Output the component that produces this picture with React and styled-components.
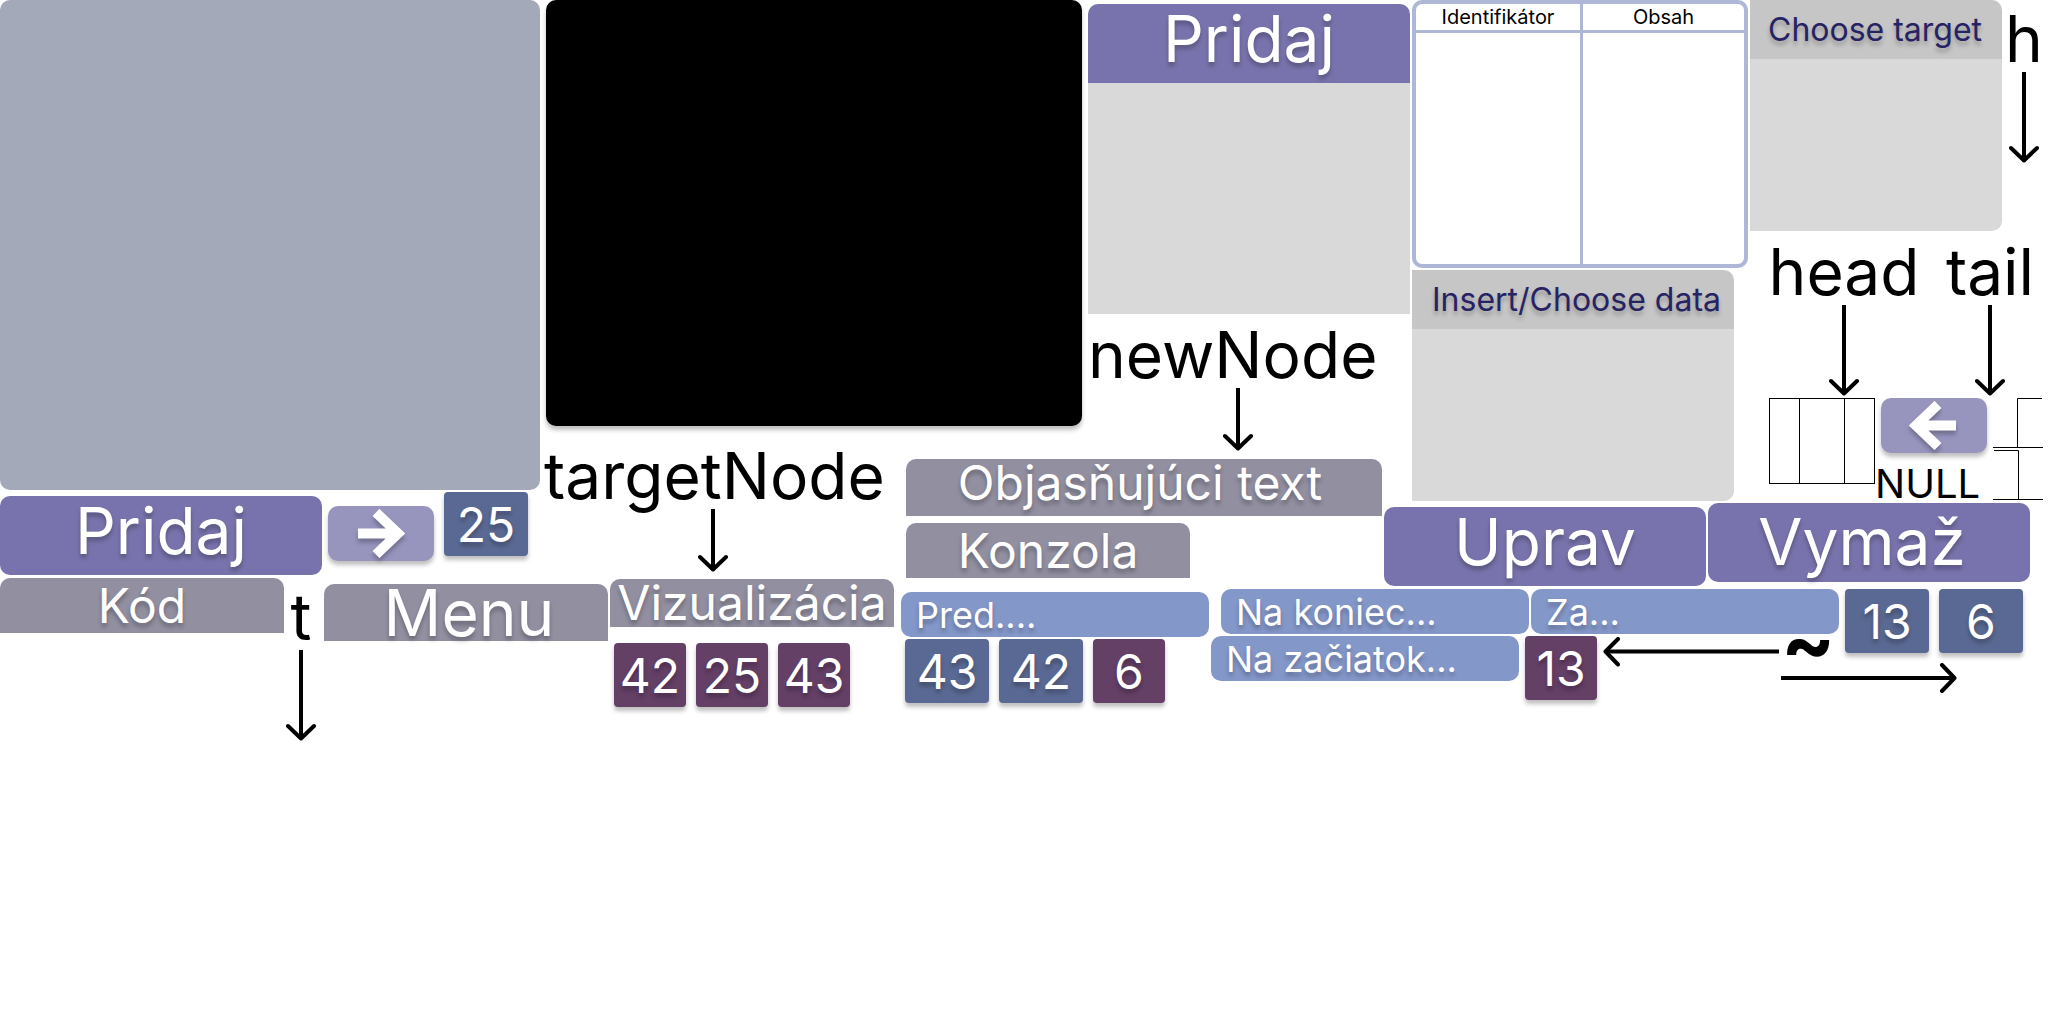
import React from "react";
import styled, { createGlobalStyle } from "styled-components";

const GlobalStyle = createGlobalStyle`
  *, *::before, *::after { box-sizing: border-box; }
  body {
    margin: 0;
    background: #fff;
    color: #000;
    font-family: Inter, "Liberation Sans", sans-serif;
    overflow-x: hidden;
  }
  button { font: inherit; border: 0; margin: 0; padding: 0; cursor: pointer; }
`;

const color = {
  slate: "#a3a9b9",
  violet: "#7873ac",
  lilac: "#9794be",
  navy: "#5a6993",
  plum: "#643f66",
  title: "#918fa0",
  option: "#8497c9",
  body: "#d9d9d9",
  head: "#c6c6c6",
  line: "#aeb7d5",
  ink: "#272263",
};

const Sheet = styled.main`
  display: grid;
  grid-template-columns:
    minmax(544px, 544fr) minmax(362px, 362fr) minmax(182px, 182fr)
    minmax(123px, 123fr) minmax(173px, 173fr) minmax(28px, 28fr)
    minmax(338px, 338fr) minmax(298px, 298fr);
  grid-template-rows: 431px 28px 44px 75px 11px auto;
  align-items: start;
`;

const Area = styled.section`
  grid-column: ${(p) => p.$cols};
  grid-row: ${(p) => p.$rows};
  min-width: 0;
`;

const Stack = styled.div`
  display: flex;
  flex-direction: column;
  align-items: flex-start;
  gap: ${(p) => p.$gap || 0}px;
  padding-top: ${(p) => p.$top || 0}px;
  padding-left: ${(p) => p.$left || 0}px;
  width: ${(p) => (p.$width ? `${p.$width}px` : "auto")};
  flex: none;
`;

const Row = styled.div`
  display: flex;
  align-items: flex-start;
  gap: ${(p) => p.$gap || 0}px;
  padding-top: ${(p) => p.$top || 0}px;
  padding-left: ${(p) => p.$left || 0}px;
`;

const CodePanel = styled.div`
  height: 490px;
  margin-right: 4px;
  border-radius: 10px;
  background: ${color.slate};
`;

const ConsolePanel = styled.div`
  height: 426px;
  margin: 0 6px 0 2px;
  border-radius: 10px;
  background: #000;
  box-shadow: 0 4px 4px rgba(0, 0, 0, 0.25);
`;

const ActionButton = styled.button`
  flex: none;
  width: 322px;
  height: 79px;
  border-radius: ${(p) => (p.$header ? "10px 10px 0 0" : "10px")};
  background: ${color.violet};
  color: #fff;
  text-shadow: 0 4px 4px rgba(0, 0, 0, 0.25);
  && {
    padding: ${(p) => p.$pad || "0 0 10px"};
    font-size: 64px;
    line-height: 64px;
  }
`;

const IconButton = styled.button`
  display: flex;
  align-items: center;
  justify-content: center;
  width: 106px;
  height: 55px;
  border-radius: 10px;
  background: ${color.lilac};
  box-shadow: 0 4px 4px rgba(0, 0, 0, 0.25);
  && { padding-right: ${(p) => (p.$back ? 3 : 0)}px; }
  svg { filter: drop-shadow(0 4px 2px rgba(0, 0, 0, 0.25)); }
`;

const Tile = styled.div`
  flex: none;
  width: ${(p) => (p.$plum ? 72 : 84)}px;
  height: 64px;
  border-radius: 4px;
  background: ${(p) => (p.$plum ? color.plum : color.navy)};
  box-shadow: 0 4px 4px rgba(0, 0, 0, 0.25);
  color: #fff;
  font-size: 48px;
  line-height: 66px;
  text-align: center;
  text-shadow: 0 4px 4px rgba(0, 0, 0, 0.25);
`;

const Title = styled.h2`
  display: flex;
  align-items: center;
  justify-content: center;
  flex: none;
  margin: 0;
  width: ${(p) => p.$width || 284}px;
  height: ${(p) => p.$height || 55}px;
  padding: ${(p) => p.$pad || "0"};
  border-radius: 10px 10px 0 0;
  background: ${color.title};
  color: #fff;
  font-size: ${(p) => p.$size || 48}px;
  font-weight: 400;
  line-height: 48px;
  white-space: nowrap;
  text-shadow: 0 4px 4px rgba(0, 0, 0, 0.25);
`;

const OptionButton = styled.button`
  flex: none;
  width: 308px;
  height: 45px;
  border-radius: 10px;
  background: ${color.option};
  color: #fff;
  text-align: left;
  text-shadow: 0 4px 4px rgba(0, 0, 0, 0.25);
  && {
    padding: 0 15px;
    font-size: 36px;
    line-height: 36px;
  }
`;

const Card = styled.div`
  width: ${(p) => p.$width}px;
  flex: none;
`;

const CardHead = styled.h3`
  margin: 0;
  height: 59px;
  padding-left: ${(p) => p.$inset || 18}px;
  border-top-right-radius: 10px;
  background: ${color.head};
  color: ${color.ink};
  font-size: 32px;
  font-weight: 400;
  line-height: 59px;
  white-space: nowrap;
  text-shadow: 0 4px 4px rgba(0, 0, 0, 0.25);
`;

const CardBody = styled.div`
  height: ${(p) => p.$height || 172}px;
  border-bottom-right-radius: ${(p) => (p.$square ? 0 : 10)}px;
  background: ${color.body};
`;

const TableFrame = styled.div`
  width: 336px;
  height: 268px;
  border: 4px solid ${color.line};
  border-radius: 10px;
`;

const Table = styled.table`
  width: 100%;
  height: 260px;
  border-collapse: separate;
  border-spacing: 0;
  table-layout: fixed;
  th, td { padding: 0; }
  th {
    height: 29px;
    border-bottom: 3px solid ${color.line};
    font-size: 20px;
    font-weight: 400;
    line-height: 24px;
  }
  th:first-child, td:first-child {
    width: 167px;
    border-right: 3px solid ${color.line};
  }
`;

const PointerBox = styled.div`
  display: flex;
  flex-direction: column;
  align-items: center;
  flex: none;
  gap: 1px;
  width: ${(p) => p.$width}px;
  font-size: 64px;
  line-height: 64px;
  white-space: nowrap;
  span { align-self: ${(p) => p.$align || "center"}; }
  svg { display: block; }
`;

const NodeBox = styled.div`
  display: grid;
  grid-template-columns: 29px 45px 1fr;
  width: 106px;
  height: 86px;
  border: 1px solid #000;
  i + i { border-left: 1px solid #000; }
`;

const NullText = styled.span`
  font-size: 40px;
  line-height: 40px;
`;

const Tilde = styled.span`
  height: 26px;
  font-size: 80px;
  font-weight: 700;
  line-height: 10px;
`;

const Indent = styled.div`
  padding: ${(p) => p.$pad};
`;

function DownArrow({ length }) {
  return (
    <svg width="30" height={length} fill="none" stroke="#000" strokeWidth="4" aria-hidden="true">
      <path d={`M15 0V${length - 3}`} />
      <path d={`M2 ${length - 15}L15 ${length - 2.5}L28 ${length - 15}`} strokeLinecap="round" strokeLinejoin="round" />
    </svg>
  );
}

function LongArrow({ left }) {
  return (
    <svg width="176" height="30" fill="none" stroke="#000" strokeWidth="4" aria-hidden="true">
      <path d={left ? "M3 14.500H176" : "M0 15H173"} />
      <path
        d={left ? "M15 2L2.500 14.500L15 27.500" : "M161 2L173.500 15L161 28"}
        strokeLinecap="round"
        strokeLinejoin="round"
      />
    </svg>
  );
}

function ButtonArrow({ left }) {
  return (
    <svg width="47" height="49" fill="none" stroke="#fff" strokeWidth="10" aria-hidden="true">
      <path d={left ? "M47 24.500H8M29 3.500L7 24.500L29 45.500" : "M0 24.500H39M18 3.500L40 24.500L18 45.500"} />
    </svg>
  );
}

function Pointer({ name, width, length, align }) {
  return (
    <PointerBox $width={width} $align={align}>
      <span>{name}</span>
      <DownArrow length={length} />
    </PointerBox>
  );
}

export default function App() {
  return (
    <>
      <GlobalStyle />
      <Sheet>
        <Area $cols="1 / 2" $rows="1 / 5">
          <CodePanel />
          <Row $top={2}>
            <Indent $pad="4px 6px 0 0">
              <ActionButton type="button">Pridaj</ActionButton>
            </Indent>
            <Indent $pad="14px 10px 0 0">
              <IconButton type="button" aria-label="Ďalej"><ButtonArrow /></IconButton>
            </Indent>
            <Tile>25</Tile>
          </Row>
        </Area>

        <Area $cols="2 / 4" $rows="1 / 2">
          <ConsolePanel />
        </Area>

        <Area $cols="2 / 3" $rows="2 / 5">
          <Stack $top={13}>
            <Pointer name="targetNode" width={338} length={63} align="flex-start" />
          </Stack>
        </Area>

        <Area $cols="4 / 7" $rows="1 / 3">
          <Stack $top={4} $gap={9}>
            <Card $width={322}>
              <ActionButton type="button" $header>Pridaj</ActionButton>
              <CardBody $height={231} $square />
            </Card>
            <Pointer name="newNode" width={300} length={63} align="flex-start" />
          </Stack>
        </Area>

        <Area $cols="3 / 6" $rows="3 / 5">
          <Stack $gap={7}>
            <Title $width={476} $height={57} $pad="0 8px 10px 0">Objasňujúci text</Title>
            <Title>Konzola</Title>
          </Stack>
        </Area>

        <Area $cols="7 / 8" $rows="1 / 4">
          <Stack $gap={2}>
            <TableFrame>
              <Table>
                <thead>
                  <tr><th scope="col">Identifikátor</th><th scope="col">Obsah</th></tr>
                </thead>
                <tbody>
                  <tr><td /><td /></tr>
                </tbody>
              </Table>
            </TableFrame>
            <Card $width={322}>
              <CardHead $inset={20}>Insert/Choose data</CardHead>
              <CardBody />
            </Card>
          </Stack>
        </Area>

        <Area $cols="8 / 9" $rows="1 / 4">
          <Row $gap={4}>
            <Card $width={252}>
              <CardHead>Choose target</CardHead>
              <CardBody />
            </Card>
            <Stack $top={7}>
              <Pointer name="h" width={36} length={91} />
            </Stack>
          </Row>
          <Row $top={9} $left={19} $gap={26}>
            <Pointer name="head" width={150} length={91} />
            <Pointer name="tail" width={90} length={91} />
          </Row>
          <Row $top={2} $left={19}>
            <NodeBox><i /><i /><i /></NodeBox>
            <Stack $width={118} $gap={11}>
              <Indent $pad="0 0 0 6px">
                <IconButton type="button" aria-label="Späť" $back><ButtonArrow left /></IconButton>
              </Indent>
              <NullText>NULL</NullText>
            </Stack>
            <svg width="50" height="102" fill="none" stroke="#000" aria-hidden="true">
              <path d="M49 0.500H24.500V49.500M0 49.500H50M1 52.500H25.500V101.500M0 101.500H50" />
            </svg>
          </Row>
        </Area>

        <Area $cols="6 / 9" $rows="4 / 6">
          <Row $gap={2}>
            <Stack $top={4}>
              <ActionButton type="button">Uprav</ActionButton>
            </Stack>
            <ActionButton type="button" $pad="0 14px 2px 0">Vymaž</ActionButton>
          </Row>
        </Area>

        <Area $cols="1 / 5" $rows="5 / 7">
          <Row>
            <Title>Kód</Title>
            <Stack $top={7} $width={40}>
              <Pointer name="t" width={34} length={91} />
            </Stack>
            <Stack $top={6} $width={286}>
              <Title $height={57} $size={64} $pad="0 0 0 6px">Menu</Title>
            </Stack>
            <Stack $top={1} $width={291}>
              <Title $height={48}>Vizualizácia</Title>
              <Row $top={16} $left={4} $gap={10}>
                <Tile $plum>42</Tile>
                <Tile $plum>25</Tile>
                <Tile $plum>43</Tile>
              </Row>
            </Stack>
            <Stack $top={14}>
              <OptionButton type="button">Pred....</OptionButton>
              <Row $top={2} $left={4} $gap={10}>
                <Tile>43</Tile>
                <Tile>42</Tile>
                <Tile $plum>6</Tile>
              </Row>
            </Stack>
          </Row>
        </Area>

        <Area $cols="5 / 9" $rows="6 / 7">
          <Row $gap={6}>
            <Stack $width={628} $gap={2}>
              <Row $left={10} $gap={2}>
                <OptionButton type="button">Na koniec...</OptionButton>
                <OptionButton type="button">Za...</OptionButton>
              </Row>
              <Row $gap={6}>
                <OptionButton type="button">Na začiatok...</OptionButton>
                <Tile $plum>13</Tile>
                <Row $top={1} $gap={2}>
                  <LongArrow left />
                  <Stack>
                    <Tilde>~</Tilde>
                    <LongArrow />
                  </Stack>
                </Row>
              </Row>
            </Stack>
            <Row $gap={10}>
              <Tile>13</Tile>
              <Tile>6</Tile>
            </Row>
          </Row>
        </Area>
      </Sheet>
    </>
  );
}
